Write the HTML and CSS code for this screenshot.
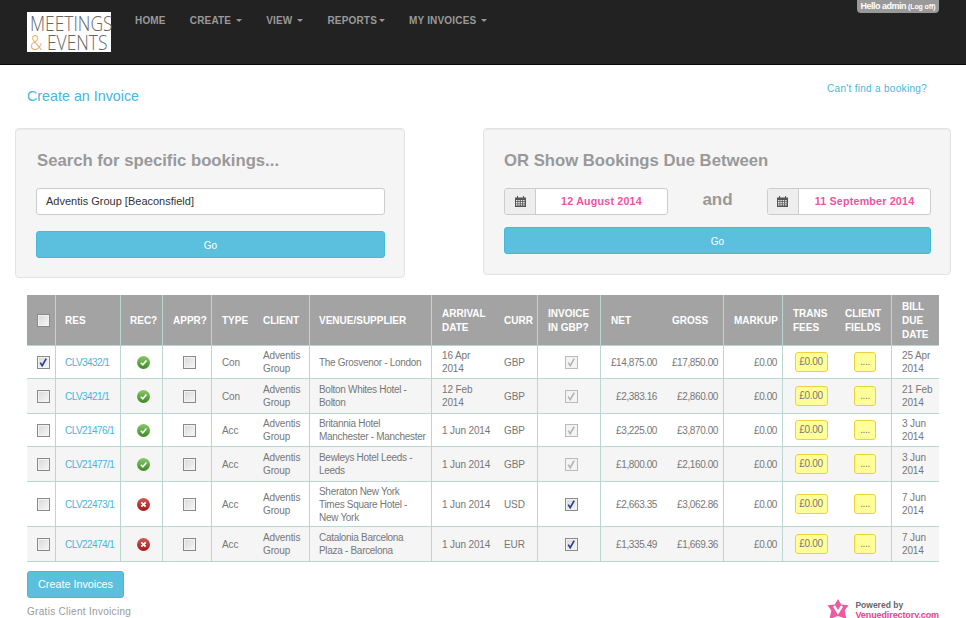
FILE: index.html
```html
<!DOCTYPE html>
<html lang="en">
<head>
<meta charset="utf-8">
<title>Create an Invoice</title>
<link rel="stylesheet" href="styles.css">
</head>
<body>
<svg class="defs" width="0" height="0" aria-hidden="true">
  <defs>
    <linearGradient id="gGreen" x1="0" y1="0" x2="0" y2="1"><stop offset="0" stop-color="#8cc86a"/><stop offset="1" stop-color="#3a8a26"/></linearGradient>
    <linearGradient id="gRed" x1="0" y1="0" x2="0" y2="1"><stop offset="0" stop-color="#d65555"/><stop offset="1" stop-color="#a01c1c"/></linearGradient>
    <symbol id="ok" viewBox="0 0 13 13"><circle cx="6.5" cy="6.5" r="6.5" fill="url(#gGreen)"/><path d="M3.8 6.800l2 2 3.600-4.400" fill="none" stroke="#fff" stroke-width="1.600"/></symbol>
    <symbol id="no" viewBox="0 0 13 13"><circle cx="6.5" cy="6.5" r="6.5" fill="url(#gRed)"/><path d="M4.300 4.300l4.400 4.400M8.700 4.300l-4.400 4.400" fill="none" stroke="#fff" stroke-width="1.800"/></symbol>
    <symbol id="tick" viewBox="0 0 11 11"><path d="M2.200 5.600l2 3 4-7" fill="none" stroke="currentColor" stroke-width="1.700"/></symbol>
    <symbol id="cal" viewBox="0 0 11 11"><path fill="#555" d="M0 1.500h2V0h1v1.500h5V0h1v1.500h2V11H0z"/><path fill="#eee" d="M1 4h1.500v1.300H1zM3.300 4h1.500v1.300H3.300zM5.700 4h1.500v1.300H5.700zM8.100 4h1.500v1.300H8.100zM1 6.100h1.500v1.300H1zM3.300 6.100h1.500v1.300H3.300zM5.700 6.100h1.500v1.300H5.700zM8.100 6.100h1.500v1.300H8.100zM1 8.200h1.500v1.300H1zM3.300 8.200h1.500v1.300H3.300zM5.700 8.200h1.500v1.300H5.700zM8.100 8.200h1.500v1.300H8.100z"/></symbol>
  </defs>
</svg>

<header class="navbar">
  <div class="logo"><span class="logo-line">MEETINGS</span><span class="logo-line"><span class="amp">&amp;</span> EVENTS</span></div>
  <nav class="nav">
    <a>HOME</a>
    <a>CREATE <i class="caret"></i></a>
    <a>VIEW <i class="caret"></i></a>
    <a>REPORTS<i class="caret"></i></a>
    <a>MY INVOICES <i class="caret"></i></a>
  </nav>
  <div class="hello">Hello admin <small>(Log off)</small></div>
</header>

<main class="page">
  <div class="title-row">
    <h1 class="page-title">Create an Invoice</h1>
    <a class="find">Can't find a booking?</a>
  </div>

  <div class="panels">
    <section class="panel panel-left">
      <h2>Search for specific bookings...</h2>
      <div class="text-input">Adventis Group [Beaconsfield]</div>
      <div class="btn-go">Go</div>
    </section>
    <section class="panel panel-right">
      <h2>OR Show Bookings Due Between</h2>
      <div class="date-row">
        <div class="date-group"><span class="addon"><svg class="ic-cal"><use href="#cal"/></svg></span><span class="date">12 August 2014</span></div>
        <span class="and">and</span>
        <div class="date-group"><span class="addon"><svg class="ic-cal"><use href="#cal"/></svg></span><span class="date">11 September 2014</span></div>
      </div>
      <div class="btn-go">Go</div>
    </section>
  </div>

  <table class="grid">
    <colgroup>
      <col class="c1"><col class="c2"><col class="c3"><col class="c4"><col class="c5"><col class="c6"><col class="c7"><col class="c8"><col class="c9"><col class="c10"><col class="c11"><col class="c12"><col class="c13"><col class="c14"><col class="c15"><col class="c16">
    </colgroup>
    <thead>
      <tr>
        <th class="ctr b"><span class="cb"></span></th><th class="b">RES</th><th class="b">REC?</th><th class="b">APPR?</th><th>TYPE</th><th class="b">CLIENT</th><th class="b">VENUE/SUPPLIER</th><th>ARRIVAL DATE</th><th class="b">CURR</th><th class="b">INVOICE IN GBP?</th><th>NET</th><th class="b">GROSS</th><th class="b">MARKUP</th><th>TRANS FEES</th><th class="b">CLIENT FIELDS</th><th>BILL DUE DATE</th>
      </tr>
    </thead>
    <tbody>
      <tr class="r33">
        <td class="ctr b"><span class="cb on"><svg class="tick"><use href="#tick"/></svg></span></td><td class="b"><a class="res">CLV3432/1</a></td><td class="ctr b"><svg class="st"><use href="#ok"/></svg></td><td class="ctr b"><span class="cb"></span></td><td>Con</td><td class="b">Adventis Group</td><td class="b">The Grosvenor - London</td><td>16 Apr<br>2014</td><td class="b">GBP</td><td class="ctr b"><span class="cb dis"><svg class="tick"><use href="#tick"/></svg></span></td><td class="num">£14,875.00</td><td class="num b">£17,850.00</td><td class="num b">£0.00</td><td class="ctr"><span class="yb">£0.00</span></td><td class="ctr b"><span class="yb dots">....</span></td><td>25 Apr 2014</td>
      </tr>
      <tr class="r35 alt">
        <td class="ctr b"><span class="cb"></span></td><td class="b"><a class="res">CLV3421/1</a></td><td class="ctr b"><svg class="st"><use href="#ok"/></svg></td><td class="ctr b"><span class="cb"></span></td><td>Con</td><td class="b">Adventis Group</td><td class="b">Bolton Whites Hotel -<br>Bolton</td><td>12 Feb<br>2014</td><td class="b">GBP</td><td class="ctr b"><span class="cb dis"><svg class="tick"><use href="#tick"/></svg></span></td><td class="num">£2,383.16</td><td class="num b">£2,860.00</td><td class="num b">£0.00</td><td class="ctr"><span class="yb">£0.00</span></td><td class="ctr b"><span class="yb dots">....</span></td><td>21 Feb 2014</td>
      </tr>
      <tr class="r33">
        <td class="ctr b"><span class="cb"></span></td><td class="b"><a class="res">CLV21476/1</a></td><td class="ctr b"><svg class="st"><use href="#ok"/></svg></td><td class="ctr b"><span class="cb"></span></td><td>Acc</td><td class="b">Adventis Group</td><td class="b">Britannia Hotel<br>Manchester - Manchester</td><td>1 Jun 2014</td><td class="b">GBP</td><td class="ctr b"><span class="cb dis"><svg class="tick"><use href="#tick"/></svg></span></td><td class="num">£3,225.00</td><td class="num b">£3,870.00</td><td class="num b">£0.00</td><td class="ctr"><span class="yb">£0.00</span></td><td class="ctr b"><span class="yb dots">....</span></td><td>3 Jun 2014</td>
      </tr>
      <tr class="r35 alt">
        <td class="ctr b"><span class="cb"></span></td><td class="b"><a class="res">CLV21477/1</a></td><td class="ctr b"><svg class="st"><use href="#ok"/></svg></td><td class="ctr b"><span class="cb"></span></td><td>Acc</td><td class="b">Adventis Group</td><td class="b">Bewleys Hotel Leeds -<br>Leeds</td><td>1 Jun 2014</td><td class="b">GBP</td><td class="ctr b"><span class="cb dis"><svg class="tick"><use href="#tick"/></svg></span></td><td class="num">£1,800.00</td><td class="num b">£2,160.00</td><td class="num b">£0.00</td><td class="ctr"><span class="yb">£0.00</span></td><td class="ctr b"><span class="yb dots">....</span></td><td>3 Jun 2014</td>
      </tr>
      <tr class="r45">
        <td class="ctr b"><span class="cb"></span></td><td class="b"><a class="res">CLV22473/1</a></td><td class="ctr b"><svg class="st"><use href="#no"/></svg></td><td class="ctr b"><span class="cb"></span></td><td>Acc</td><td class="b">Adventis Group</td><td class="b">Sheraton New York<br>Times Square Hotel -<br>New York</td><td>1 Jun 2014</td><td class="b">USD</td><td class="ctr b"><span class="cb on"><svg class="tick"><use href="#tick"/></svg></span></td><td class="num">£2,663.35</td><td class="num b">£3,062.86</td><td class="num b">£0.00</td><td class="ctr"><span class="yb">£0.00</span></td><td class="ctr b"><span class="yb dots">....</span></td><td>7 Jun 2014</td>
      </tr>
      <tr class="r35 alt">
        <td class="ctr b"><span class="cb"></span></td><td class="b"><a class="res">CLV22474/1</a></td><td class="ctr b"><svg class="st"><use href="#no"/></svg></td><td class="ctr b"><span class="cb"></span></td><td>Acc</td><td class="b">Adventis Group</td><td class="b">Catalonia Barcelona<br>Plaza - Barcelona</td><td>1 Jun 2014</td><td class="b">EUR</td><td class="ctr b"><span class="cb on"><svg class="tick"><use href="#tick"/></svg></span></td><td class="num">£1,335.49</td><td class="num b">£1,669.36</td><td class="num b">£0.00</td><td class="ctr"><span class="yb">£0.00</span></td><td class="ctr b"><span class="yb dots">....</span></td><td>7 Jun 2014</td>
      </tr>
    </tbody>
  </table>

  <div class="btn-create">Create Invoices</div>
  <div class="foot">
    <span class="gratis">Gratis Client Invoicing</span>
    <div class="powered">
      <svg class="star" viewBox="0 0 22 20"><path fill="#ec5a9f" d="M11 0l3.200 5.500 7.300 .8-3.800 5.200 1.800 8.500-8.500-3-8.500 3 1.800-8.500L.5 6.300l7.300-.8z"/><path d="M7 7l4 6.500 4-6.500" fill="none" stroke="#fff" stroke-width="2.400"/></svg>
      <div class="pw-text"><span class="pw-1">Powered by</span><span class="pw-2">Venuedirectory.com</span></div>
    </div>
  </div>
</main>
</body>
</html>
```
FILE: styles.css
```css
* { box-sizing: border-box; }
html, body { margin: 0; height: 618px; overflow: hidden; }
body { font-family: "Liberation Sans", Arial, sans-serif; font-size: 10px; color: #777; background: #fff; }
.defs { position: absolute; }

.navbar { height: 65px; background: #222; border-bottom: 1px solid #080808; display: flex; padding: 12px 27px 0; position: relative; }
.logo { width: 84px; height: 40px; background: #fff; display: block; padding: 2px 0 0 3px; font-family: "Open Sans", sans-serif; font-weight: 300; font-size: 21px; line-height: 19px; color: #666; white-space: nowrap; }
.logo-line { display: block; transform: scaleX(.83); transform-origin: left center; }
.amp { color: #e2a95f; }
.nav { display: flex; gap: 24px; margin-left: 24px; padding-top: 3px; font-size: 10px; font-weight: 700; color: #999; line-height: 12px; letter-spacing: .18px; }
.nav a { display: block; white-space: nowrap; }
.caret { display: inline-block; width: 0; height: 0; margin-left: 2px; vertical-align: 2px; border-top: 3px solid #999; border-left: 3px solid transparent; border-right: 3px solid transparent; }
.hello { position: absolute; top: 0; right: 27px; width: 82px; height: 13px; background: #999; border-radius: 0 0 4px 4px; color: #fff; font-size: 9px; letter-spacing: -.5px; font-weight: 700; line-height: 12px; text-align: center; white-space: nowrap; }
.hello small { font-size: 7px; letter-spacing: -.1px; }

.page { padding: 0 15px; }
.title-row { height: 63px; display: flex; justify-content: space-between; padding: 0 24px 0 12px; }
.page-title { margin: 23px 0 0; font-size: 14.300px; line-height: 16px; font-weight: 400; color: #48b7dc; }
.find { margin: 18px 0 0; font-size: 10px; line-height: 12px; letter-spacing: .3px; color: #48b7dc; }

.panels { display: flex; justify-content: space-between; align-items: flex-start; height: 167px; }
.panel { background: #f5f5f5; border: 1px solid #e3e3e3; border-radius: 4px; padding: 20px 19px 20px 20px; box-shadow: inset 0 1px 1px rgba(0,0,0,.05); }
.panel-left { width: 390px; height: 150px; }
.panel-right { width: 468px; height: 147px; }
.panel h2 { margin: 1px 0 17px; font-size: 16.700px; line-height: 21px; font-weight: 700; color: #999; }
.panel-left h2 { padding-left: 1px; }
.text-input { height: 27px; background: #fff; border: 1px solid #ccc; border-radius: 3px; padding: 0 9px; font-size: 11px; line-height: 25px; color: #333; margin-bottom: 16px; }
.btn-go { height: 27px; background: #5bc0de; border: 1px solid #46b8da; border-radius: 3px; color: #fff; font-size: 10px; line-height: 27px; text-align: center; }
.date-row { display: flex; justify-content: space-between; align-items: flex-start; margin-bottom: 12px; }
.date-group { width: 164px; height: 27px; display: flex; background: #fff; border: 1px solid #ccc; border-radius: 3px; overflow: hidden; }
.addon { width: 31px; background: #eee; border-right: 1px solid #ccc; display: flex; align-items: center; justify-content: center; }
.ic-cal { width: 11px; height: 11px; }
.date { flex: 1; text-align: center; color: #ec559f; font-weight: 700; font-size: 10.700px; line-height: 25px; letter-spacing: .2px; }
.and { font-size: 17px; font-weight: 700; line-height: 23px; color: #999; }

.grid { width: 912px; margin-left: 12px; table-layout: fixed; border-collapse: separate; border-spacing: 0; font-size: 10px; letter-spacing: -.13px; line-height: 13px; }
.c1 { width: 29px; } .c2 { width: 65px; } .c3 { width: 42px; } .c4 { width: 49px; }
.c5 { width: 41px; } .c6 { width: 57px; } .c7 { width: 122px; } .c8 { width: 62px; }
.c9 { width: 44px; } .c10 { width: 63px; } .c11 { width: 61px; } .c12 { width: 62px; }
.c13 { width: 59px; } .c14 { width: 52px; } .c15 { width: 57px; } .c16 { width: 47px; }
.grid th { height: 51px; background: #a3a3a3; color: #fff; font-size: 10px; letter-spacing: 0; font-weight: 700; text-align: left; padding: 1px 2px 0 10px; line-height: 14px; border-bottom: 1px solid #b9d6d2; }
.grid td { padding: 0 3px 0 10px; border-bottom: 1px solid #b9d6d2; }
.grid th:nth-child(2), .grid th:nth-child(3), .grid th:nth-child(7), .grid td:nth-child(2), .grid td:nth-child(7) { padding-left: 9px; }
.grid td:nth-child(7), .grid td:nth-child(8) { padding-right: 0; }
.grid td:nth-child(7) { letter-spacing: -.3px; }
.grid .b { border-right: 1px solid #b9d6d2; }
.grid .ctr { padding: 0 0 0 4px; text-align: center; }
.grid .num { text-align: right; padding: 0 5px 0 0; letter-spacing: -.4px; }
.r33 { height: 33px; } .r35 { height: 35px; } .r45 { height: 45px; }
.alt td { background: #f5f5f5; }
.res { color: #48b7dc; letter-spacing: -.55px; }

.cb { display: inline-block; width: 13px; height: 13px; vertical-align: middle; border: 1px solid #8a8a8a; background: linear-gradient(135deg, #d8d8d8, #f8f8f8); box-shadow: inset 0 0 0 1px #f2f2f2; position: relative; color: #2b3f8f; }
.cb.dis { border-color: #bbb; background: #f4f4f4; color: #b5b5b5; }
.tick { position: absolute; left: 0; top: 0; width: 11px; height: 11px; }
.st { display: inline-block; width: 13px; height: 13px; vertical-align: middle; }
.yb { display: inline-block; width: 33px; height: 20px; vertical-align: middle; background: #ffff99; border: 1px solid #f0d040; border-radius: 3px; font-size: 10px; letter-spacing: -.35px; line-height: 18px; text-align: center; color: #777; }
.yb.dots { width: 22px; }

.btn-create { width: 97px; height: 27px; margin: 9px 0 0 12px; background: #5bc0de; border: 1px solid #46b8da; border-radius: 3px; color: #fff; font-size: 10.800px; line-height: 25px; text-align: center; }
.foot { display: flex; justify-content: space-between; align-items: flex-start; padding: 0 12px; }
.gratis { margin-top: 7px; font-size: 10px; line-height: 13px; color: #999; letter-spacing: .3px; }
.powered { display: flex; gap: 6px; margin-top: 1px; }
.star { width: 22px; height: 20px; }
.pw-text { display: flex; flex-direction: column; padding-top: 1px; font-size: 8.500px; line-height: 10px; font-weight: 700; }
.pw-1 { color: #666; }
.pw-2 { color: #ec3f8e; font-size: 9px; letter-spacing: -.1px; }
```
